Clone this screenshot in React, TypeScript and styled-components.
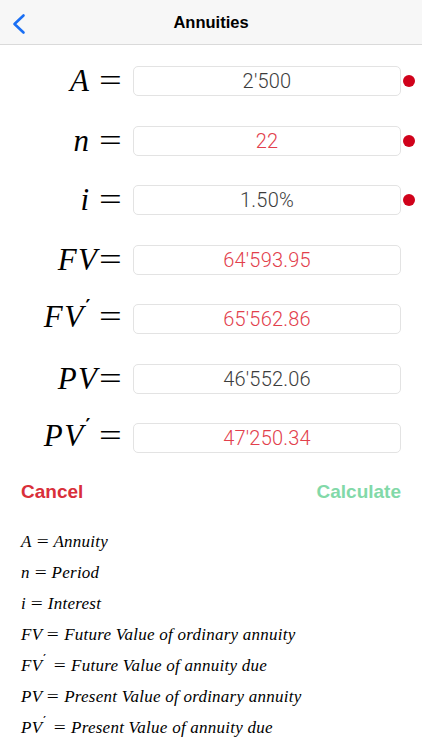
import React from 'react'
import styled, { createGlobalStyle } from 'styled-components'

const GlobalStyle = createGlobalStyle`
  html, body {
    margin: 0;
    padding: 0;
    background: #ffffff;
  }
  body {
    font-family: "Liberation Sans", Arial, sans-serif;
    -webkit-font-smoothing: antialiased;
  }
`

const Screen = styled.div`
  width: 422px;
  min-height: 750px;
  background: #fff;
`

const NavBar = styled.header`
  height: 44px;
  display: grid;
  grid-template-columns: 1fr auto 1fr;
  align-items: center;
  background: #f7f7f7;
  border-bottom: 1px solid #dadada;
`

const BackButton = styled.button`
  justify-self: start;
  display: flex;
  align-items: center;
  margin: 3px 0 0 11px;
  padding: 0;
  border: 0;
  background: none;
  cursor: pointer;
`

const Title = styled.h1`
  margin: 0;
  font-family: "Liberation Sans", Arial, sans-serif;
  font-size: 16.5px;
  font-weight: 700;
  color: #000;
`

const Form = styled.section`
  display: flex;
  flex-direction: column;
  gap: 29.5px;
  padding-top: 21px;
`

const Row = styled.div`
  display: flex;
  align-items: center;
  height: 30px;
`

const Label = styled.div`
  width: 121px;
  display: flex;
  justify-content: flex-end;
  align-items: baseline;
  font-family: "Liberation Serif", "Times New Roman", serif;
  font-size: 31px;
  line-height: 30px;
  color: #000;
`

const Var = styled.span`
  font-style: italic;
  letter-spacing: 1.5px;
`

const Prime = styled.span`
  font-family: "DejaVu Serif", serif;
  font-size: 0.6em;
  font-weight: 700;
  position: relative;
  top: -0.75em;
  margin-left: 1px;
`

const Eq = styled.span<{ $tight?: boolean }>`
  display: inline-block;
  margin-left: ${(p) => (p.$tight ? '0' : '8px')};
  transform: scaleX(1.3);
  transform-origin: left center;
  margin-right: 5px;
`

const Field = styled.div<{ $red?: boolean }>`
  box-sizing: border-box;
  width: 268px;
  height: 30px;
  margin-left: 12px;
  border: 1px solid #e3e3e3;
  border-radius: 5px;
  display: flex;
  align-items: center;
  justify-content: center;
  font-family: Roboto, "Liberation Sans", sans-serif;
  font-weight: 300;
  font-size: 20px;
  letter-spacing: 0.2px;
  color: ${(p) => (p.$red ? '#e2404c' : '#3c3c3c')};
`

const Dot = styled.span`
  width: 12px;
  height: 12px;
  margin-left: 2px;
  border-radius: 50%;
  background: #d0021b;
`

const Actions = styled.div`
  display: flex;
  justify-content: space-between;
  padding: 0 21px;
  margin-top: 27px;
`

const ActionButton = styled.button<{ $tone: 'cancel' | 'calc' }>`
  padding: 0;
  border: 0;
  background: none;
  font-family: "Liberation Sans", Arial, sans-serif;
  font-weight: 700;
  font-size: 19px;
  line-height: 23px;
  color: ${(p) => (p.$tone === 'cancel' ? '#d92f3a' : '#82d9a8')};
`

const Legend = styled.ul`
  list-style: none;
  margin: 23px 0 0;
  padding: 0 0 0 21px;
`

const LegendItem = styled.li`
  height: 31px;
  display: flex;
  align-items: center;
  font-family: "Liberation Serif", "Times New Roman", serif;
  font-style: italic;
  font-size: 17px;
  letter-spacing: 0.25px;
  color: #000;
  white-space: pre;
`

const LegendEq = styled.span`
  font-style: normal;
  margin: 0 6px;
  display: inline-block;
  transform: scaleX(1.25);
`

const SmallPrime = styled.span`
  font-style: normal;
  font-family: "DejaVu Serif", serif;
  font-size: 0.6em;
  font-weight: 700;
  position: relative;
  top: -0.7em;
  margin-left: 1px;
  margin-right: 3px;
`

type Entry = {
  name: string
  prime?: boolean
  tight?: boolean
  value: string
  red?: boolean
  dot?: boolean
}

const entries: Entry[] = [
  { name: 'A', value: "2'500", dot: true },
  { name: 'n', value: '22', red: true, dot: true },
  { name: 'i', value: '1.50%', dot: true },
  { name: 'FV', tight: true, value: "64'593.95", red: true },
  { name: 'FV', prime: true, value: "65'562.86", red: true },
  { name: 'PV', tight: true, value: "46'552.06" },
  { name: 'PV', prime: true, value: "47'250.34", red: true },
]

const legend: { name: string; prime?: boolean; text: string }[] = [
  { name: 'A', text: 'Annuity' },
  { name: 'n', text: 'Period' },
  { name: 'i', text: 'Interest' },
  { name: 'FV', text: 'Future Value of ordinary annuity' },
  { name: 'FV', prime: true, text: 'Future Value of annuity due' },
  { name: 'PV', text: 'Present Value of ordinary annuity' },
  { name: 'PV', prime: true, text: 'Present Value of annuity due' },
]

function Chevron() {
  return (
    <svg width="16" height="22" viewBox="0 0 16 22">
      <polyline
        points="12.5,2.5 3.5,11 12.5,19.5"
        fill="none"
        stroke="#1a6ff4"
        strokeWidth="2.6"
        strokeLinecap="round"
        strokeLinejoin="round"
      />
    </svg>
  )
}

export default function App() {
  return (
    <Screen>
      <GlobalStyle />
      <NavBar>
        <BackButton aria-label="Back">
          <Chevron />
        </BackButton>
        <Title>Annuities</Title>
        <span />
      </NavBar>

      <Form>
        {entries.map((e, i) => (
          <Row key={i}>
            <Label>
              <Var>{e.name}</Var>
              {e.prime && <Prime>′</Prime>}
              <Eq $tight={e.tight}>=</Eq>
            </Label>
            <Field $red={e.red}>{e.value}</Field>
            {e.dot && <Dot />}
          </Row>
        ))}
      </Form>

      <Actions>
        <ActionButton $tone="cancel">Cancel</ActionButton>
        <ActionButton $tone="calc">Calculate</ActionButton>
      </Actions>

      <Legend>
        {legend.map((l, i) => (
          <LegendItem key={i}>
            {l.name}
            {l.prime && <SmallPrime>′</SmallPrime>}
            <LegendEq>=</LegendEq>
            {l.text}
          </LegendItem>
        ))}
      </Legend>
    </Screen>
  )
}
